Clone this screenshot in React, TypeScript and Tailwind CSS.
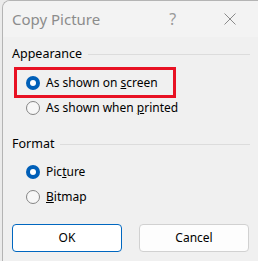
import React from "react";

function Radio({ checked }: { checked?: boolean }) {
  return checked ? (
    <span className="w-[14px] h-[14px] rounded-full bg-[#005fb8] flex items-center justify-center shrink-0">
      <span className="w-[6px] h-[6px] rounded-full bg-white" />
    </span>
  ) : (
    <span className="w-[14px] h-[14px] rounded-full border border-[#858585] bg-[#f7f7f7] shrink-0" />
  );
}

function Section({ title }: { title: string }) {
  return (
    <div className="flex items-center gap-[6px] pr-[2px] h-[16px]">
      <span className="text-[12.5px] text-black leading-[16px] whitespace-nowrap">{title}</span>
      <span className="flex-1 h-px bg-[#dcdcdc]" />
    </div>
  );
}

export default function App() {
  return (
    <div
      className="w-[258px] h-[261px] bg-[#ebebeb] overflow-hidden"
      style={{ fontFamily: '"Noto Sans", "Open Sans", sans-serif' }}
    >
      <div className="ml-[2px] h-[270px] w-[262px] border-l border-t border-[#b4b4b4] rounded-tl-[8px] bg-[#f0f0f0] overflow-hidden flex flex-col">
        <div className="h-[36px] bg-[#f3f3f3] flex items-center pl-[9px] shrink-0">
          <span className="text-[15px] text-[#8c8c8c] leading-none">Copy Picture</span>
          <span className="ml-[69px] text-[16px] text-[#9a9a9a] leading-none">?</span>
          <svg className="ml-[48px]" width="12" height="12" viewBox="0 0 12 12">
            <path d="M0.5 0.5 L11.5 11.5 M11.5 0.5 L0.5 11.5" stroke="#8a8a8a" strokeWidth="1" fill="none" />
          </svg>
        </div>
        <div className="flex flex-col pl-[9px] pr-[12px] pt-[9px]">
          <Section title="Appearance" />
          <div className="mt-[5px] ml-[2px] w-[162px] h-[31px] border-[3px] border-[#e81123] flex items-center pl-[9px] gap-[6px]">
            <Radio checked />
            <span className="text-[12px] text-black leading-none whitespace-nowrap">
              As shown on <u>s</u>creen
            </span>
          </div>
          <div className="flex items-center pl-[14px] gap-[6px] h-[20px]">
            <Radio />
            <span className="text-[12px] text-black leading-none whitespace-nowrap">
              As shown when <u>p</u>rinted
            </span>
          </div>
          <div className="mt-[18px]">
            <Section title="Format" />
          </div>
          <div className="mt-[10px] flex items-center pl-[14px] gap-[6px] h-[20px]">
            <Radio checked />
            <span className="text-[12px] text-black leading-none">
              Pic<u>t</u>ure
            </span>
          </div>
          <div className="mt-[5px] flex items-center pl-[14px] gap-[6px] h-[20px]">
            <Radio />
            <span className="text-[12px] text-black leading-none">
              <u>B</u>itmap
            </span>
          </div>
          <div className="mt-[17px] flex gap-[17px]">
            <button className="w-[110px] h-[28px] rounded-[4px] border border-[#0067c0] bg-white text-[12px] text-black">
              OK
            </button>
            <button className="w-[110px] h-[28px] rounded-[4px] border border-[#d1d1d1] bg-[#fdfdfd] text-[12px] text-black">
              Cancel
            </button>
          </div>
        </div>
      </div>
    </div>
  );
}
